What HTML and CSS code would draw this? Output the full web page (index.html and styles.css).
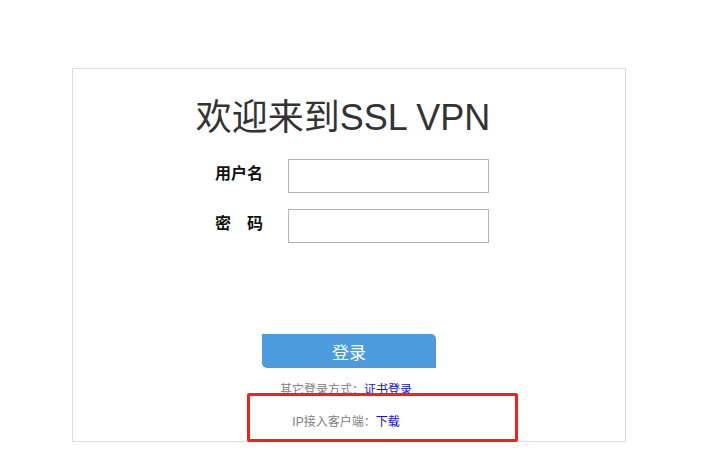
FILE: index.html
```html
<!DOCTYPE html>
<html lang="zh-CN">
<head>
    <meta charset="UTF-8">
    <meta name="viewport" content="width=device-width, initial-scale=1.0">
    <title>SSL VPN</title>
    <link rel="stylesheet" href="styles.css">
</head>
<body>

    <div class="login-box">
        <h1>欢迎来到SSL VPN</h1>

        <div class="form-row">
            <label class="label" for="username">用户名</label>
            <input class="input" type="text" id="username">
        </div>
        <div class="form-row">
            <label class="label spaced" for="password"><span>密</span><span>码</span></label>
            <input class="input" type="password" id="password">
        </div>

        <div class="btn-row">
            <button class="login-btn">登录</button>
        </div>

        <p class="other">其它登录方式：<a href="#">证书登录</a></p>
        <p class="client">IP接入客户端：<a href="#">下载</a></p>

        <div class="mark"></div>
    </div>

</body>
</html>
```

FILE: styles.css
```css
body {
    margin: 0;
    padding: 68px 0 0 72px;
    font-family: "Liberation Sans", "Noto Sans CJK SC", sans-serif;
    background-color: #fff;
}
.login-box {
    position: relative;
    width: 552px;
    border: 1px solid #dcdcdc;
    padding: 29px 0 10px;
}
h1 {
    margin: 0 0 21px;
    padding-right: 12px;
    font-size: 36px;
    line-height: 40px;
    font-weight: normal;
    color: #333;
    text-align: center;
}
.form-row {
    display: flex;
    align-items: center;
    padding-left: 142px;
    margin-bottom: 16px;
}
.label {
    flex: none;
    width: 48px;
    margin: 0 25px 4px 0;
    font-size: 16px;
    line-height: 20px;
    font-weight: bold;
    color: #111;
    white-space: nowrap;
}
.spaced {
    display: flex;
    justify-content: space-between;
}
.input {
    box-sizing: border-box;
    width: 201px;
    height: 34px;
    margin: 0;
    border: 1px solid #b5b5b5;
}
.btn-row {
    padding: 75px 0 0 189px;
}
.login-btn {
    display: block;
    width: 174px;
    height: 34px;
    border: none;
    border-radius: 0 5px 0 5px;
    background-color: #4c9bdc;
    color: #fff;
    font-family: "Noto Sans CJK SC", sans-serif;
    font-size: 17px;
    cursor: pointer;
}
.other, .client {
    margin: 0;
    padding-right: 6px;
    font-size: 12px;
    line-height: 18px;
    color: #808080;
    text-align: center;
}
.other {
    margin-top: 13px;
}
.client {
    margin-top: 14px;
}
.other a, .client a {
    color: #1010e0;
    text-decoration: none;
}
.mark {
    position: absolute;
    left: 174px;
    top: 324px;
    width: 265px;
    height: 43px;
    border: 3px solid #f5201a;
    border-radius: 2px;
}
```
